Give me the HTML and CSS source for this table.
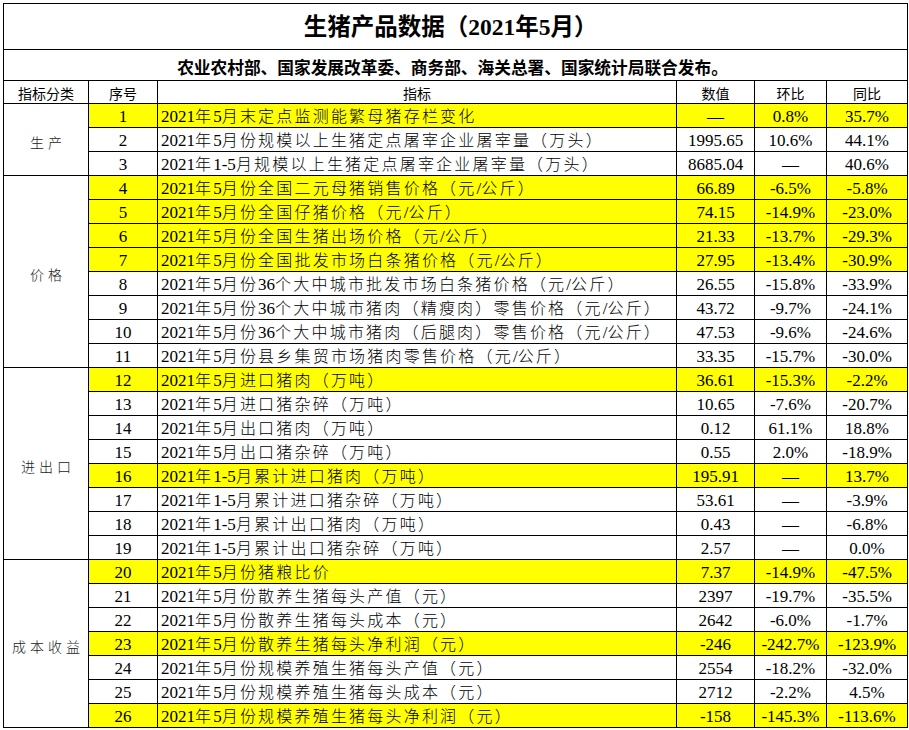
FILE: index.html
```html
<!DOCTYPE html>
<html lang="zh-CN">
<head>
<meta charset="utf-8">
<title>生猪产品数据（2021年5月）</title>
<link rel="stylesheet" href="styles.css">
</head>
<body>
<table class="sheet">
<colgroup>
<col class="c-a"><col class="c-b"><col class="c-c"><col class="c-d"><col class="c-e"><col class="c-f">
</colgroup>
<tbody>
<tr class="r-title"><td colspan="6" class="title">生猪产品数据（2021年5月）</td></tr>
<tr class="r-sub"><td colspan="6" class="sub">农业农村部、国家发展改革委、商务部、海关总署、国家统计局联合发布。</td></tr>
<tr class="r-head"><td>指标分类</td><td>序号</td><td>指标</td><td>数值</td><td>环比</td><td>同比</td></tr>

<tr class="hl"><td rowspan="3" class="cat">生产</td><td class="no">1</td><td class="name"><span class="d">2021</span>年<span class="d">5</span>月末定点监测能繁母猪存栏变化</td><td class="num">—</td><td class="num">0.8%</td><td class="num">35.7%</td></tr>
<tr><td class="no">2</td><td class="name"><span class="d">2021</span>年<span class="d">5</span>月份规模以上生猪定点屠宰企业屠宰量（万头）</td><td class="num">1995.65</td><td class="num">10.6%</td><td class="num">44.1%</td></tr>
<tr><td class="no">3</td><td class="name"><span class="d">2021</span>年<span class="d">1-5</span>月规模以上生猪定点屠宰企业屠宰量（万头）</td><td class="num">8685.04</td><td class="num">—</td><td class="num">40.6%</td></tr>

<tr class="hl"><td rowspan="8" class="cat">价格</td><td class="no">4</td><td class="name"><span class="d">2021</span>年<span class="d">5</span>月份全国二元母猪销售价格（元<span class="d">/</span>公斤）</td><td class="num">66.89</td><td class="num">-6.5%</td><td class="num">-5.8%</td></tr>
<tr class="hl"><td class="no">5</td><td class="name"><span class="d">2021</span>年<span class="d">5</span>月份全国仔猪价格（元<span class="d">/</span>公斤）</td><td class="num">74.15</td><td class="num">-14.9%</td><td class="num">-23.0%</td></tr>
<tr class="hl"><td class="no">6</td><td class="name"><span class="d">2021</span>年<span class="d">5</span>月份全国生猪出场价格（元<span class="d">/</span>公斤）</td><td class="num">21.33</td><td class="num">-13.7%</td><td class="num">-29.3%</td></tr>
<tr class="hl"><td class="no">7</td><td class="name"><span class="d">2021</span>年<span class="d">5</span>月份全国批发市场白条猪价格（元<span class="d">/</span>公斤）</td><td class="num">27.95</td><td class="num">-13.4%</td><td class="num">-30.9%</td></tr>
<tr><td class="no">8</td><td class="name"><span class="d">2021</span>年<span class="d">5</span>月份<span class="d">36</span>个大中城市批发市场白条猪价格（元<span class="d">/</span>公斤）</td><td class="num">26.55</td><td class="num">-15.8%</td><td class="num">-33.9%</td></tr>
<tr><td class="no">9</td><td class="name"><span class="d">2021</span>年<span class="d">5</span>月份<span class="d">36</span>个大中城市猪肉（精瘦肉）零售价格（元<span class="d">/</span>公斤）</td><td class="num">43.72</td><td class="num">-9.7%</td><td class="num">-24.1%</td></tr>
<tr><td class="no">10</td><td class="name"><span class="d">2021</span>年<span class="d">5</span>月份<span class="d">36</span>个大中城市猪肉（后腿肉）零售价格（元<span class="d">/</span>公斤）</td><td class="num">47.53</td><td class="num">-9.6%</td><td class="num">-24.6%</td></tr>
<tr><td class="no">11</td><td class="name"><span class="d">2021</span>年<span class="d">5</span>月份县乡集贸市场猪肉零售价格（元<span class="d">/</span>公斤）</td><td class="num">33.35</td><td class="num">-15.7%</td><td class="num">-30.0%</td></tr>

<tr class="hl"><td rowspan="8" class="cat">进出口</td><td class="no">12</td><td class="name"><span class="d">2021</span>年<span class="d">5</span>月进口猪肉（万吨）</td><td class="num">36.61</td><td class="num">-15.3%</td><td class="num">-2.2%</td></tr>
<tr><td class="no">13</td><td class="name"><span class="d">2021</span>年<span class="d">5</span>月进口猪杂碎（万吨）</td><td class="num">10.65</td><td class="num">-7.6%</td><td class="num">-20.7%</td></tr>
<tr><td class="no">14</td><td class="name"><span class="d">2021</span>年<span class="d">5</span>月出口猪肉（万吨）</td><td class="num">0.12</td><td class="num">61.1%</td><td class="num">18.8%</td></tr>
<tr><td class="no">15</td><td class="name"><span class="d">2021</span>年<span class="d">5</span>月出口猪杂碎（万吨）</td><td class="num">0.55</td><td class="num">2.0%</td><td class="num">-18.9%</td></tr>
<tr class="hl"><td class="no">16</td><td class="name"><span class="d">2021</span>年<span class="d">1-5</span>月累计进口猪肉（万吨）</td><td class="num">195.91</td><td class="num">—</td><td class="num">13.7%</td></tr>
<tr><td class="no">17</td><td class="name"><span class="d">2021</span>年<span class="d">1-5</span>月累计进口猪杂碎（万吨）</td><td class="num">53.61</td><td class="num">—</td><td class="num">-3.9%</td></tr>
<tr><td class="no">18</td><td class="name"><span class="d">2021</span>年<span class="d">1-5</span>月累计出口猪肉（万吨）</td><td class="num">0.43</td><td class="num">—</td><td class="num">-6.8%</td></tr>
<tr><td class="no">19</td><td class="name"><span class="d">2021</span>年<span class="d">1-5</span>月累计出口猪杂碎（万吨）</td><td class="num">2.57</td><td class="num">—</td><td class="num">0.0%</td></tr>

<tr class="hl"><td rowspan="7" class="cat">成本收益</td><td class="no">20</td><td class="name"><span class="d">2021</span>年<span class="d">5</span>月份猪粮比价</td><td class="num">7.37</td><td class="num">-14.9%</td><td class="num">-47.5%</td></tr>
<tr><td class="no">21</td><td class="name"><span class="d">2021</span>年<span class="d">5</span>月份散养生猪每头产值（元）</td><td class="num">2397</td><td class="num">-19.7%</td><td class="num">-35.5%</td></tr>
<tr><td class="no">22</td><td class="name"><span class="d">2021</span>年<span class="d">5</span>月份散养生猪每头成本（元）</td><td class="num">2642</td><td class="num">-6.0%</td><td class="num">-1.7%</td></tr>
<tr class="hl"><td class="no">23</td><td class="name"><span class="d">2021</span>年<span class="d">5</span>月份散养生猪每头净利润（元）</td><td class="num">-246</td><td class="num">-242.7%</td><td class="num">-123.9%</td></tr>
<tr><td class="no">24</td><td class="name"><span class="d">2021</span>年<span class="d">5</span>月份规模养殖生猪每头产值（元）</td><td class="num">2554</td><td class="num">-18.2%</td><td class="num">-32.0%</td></tr>
<tr><td class="no">25</td><td class="name"><span class="d">2021</span>年<span class="d">5</span>月份规模养殖生猪每头成本（元）</td><td class="num">2712</td><td class="num">-2.2%</td><td class="num">4.5%</td></tr>
<tr class="hl"><td class="no">26</td><td class="name"><span class="d">2021</span>年<span class="d">5</span>月份规模养殖生猪每头净利润（元）</td><td class="num">-158</td><td class="num">-145.3%</td><td class="num">-113.6%</td></tr>
</tbody>
</table>
</body>
</html>
```

FILE: styles.css
```css
html, body {
  margin: 0;
  padding: 0;
  background: #ffffff;
}

body {
  font-family: "Liberation Serif", "Noto Sans CJK SC", serif;
  color: #000;
}

.sheet {
  margin: 3px 0 0 3px;
  border-collapse: collapse;
  table-layout: fixed;
  width: 904px;
}

.c-a { width: 85px; }
.c-b { width: 69px; }
.c-c { width: 519px; }
.c-d { width: 78px; }
.c-e { width: 72px; }
.c-f { width: 81px; }

.sheet td {
  border: 1px solid #000;
  padding: 0;
  text-align: center;
  vertical-align: middle;
  white-space: nowrap;
  overflow: hidden;
  line-height: 1;
}

.sheet tr { height: 24px; }
.sheet tr.r-title { height: 46px; }
.sheet tr.r-sub { height: 31px; }
.sheet tr.r-head { height: 23px; }

.sheet td.title {
  font-family: "Liberation Serif", "Noto Sans CJK SC", serif;
  font-weight: bold;
  font-size: 23.5px;
  padding-top: 2px;
  padding-right: 10px;
}

.sheet td.sub {
  font-family: "Noto Sans CJK SC", sans-serif;
  font-weight: bold;
  font-size: 16.7px;
  padding-top: 4px;
  padding-right: 6px;
}

.sheet .r-head td {
  font-family: "Noto Sans CJK SC", sans-serif;
  font-size: 14px;
  font-weight: 400;
  padding-top: 2px;
}

.sheet .hl td { background: #ffff00; }
.sheet .hl td.cat { background: #ffffff; }

.sheet td.cat {
  font-family: "Noto Sans CJK SC", sans-serif;
  font-size: 14px;
  font-weight: 300;
  letter-spacing: 4px;
  text-indent: 4px;
  color: #222;
  padding-top: 4px;
}

.sheet td.no, .sheet td.num {
  font-family: "Liberation Serif", serif;
  font-size: 17px;
  padding-top: 1px;
}

.sheet td.name {
  text-align: left;
  font-family: "Liberation Serif", "Noto Sans CJK SC", serif;
  font-size: 16px;
  font-weight: 300;
  letter-spacing: 2.2px;
  padding-left: 3px;
  padding-top: 1px;
}

.name .d {
  font-size: 17px;
  letter-spacing: 0;
  font-weight: 400;
}
```
